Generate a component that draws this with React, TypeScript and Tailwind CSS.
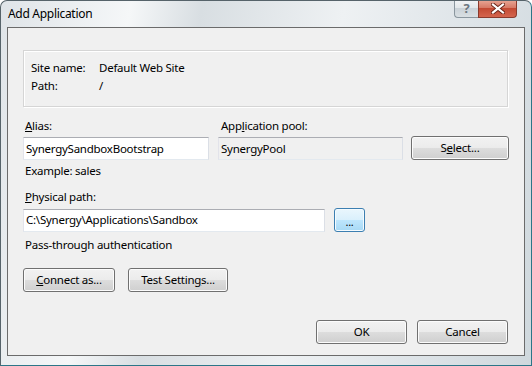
import React from "react";

const font = { fontFamily: '"Noto Sans", "Open Sans", sans-serif' };

function Btn({ children, className = "" }: { children: React.ReactNode; className?: string }) {
  return (
    <button
      className={`h-[24px] rounded-[3px] border border-[#707070] bg-[linear-gradient(#f2f2f2_0%,#ebebeb_50%,#dddddd_50%,#cfcfcf_100%)] shadow-[inset_0_0_0_1px_#fcfcfc] text-[11.5px] tracking-[-0.25px] text-black leading-none flex items-center justify-center ${className}`}
    >
      {children}
    </button>
  );
}

function Field({ value, readOnly = false, className = "" }: { value: string; readOnly?: boolean; className?: string }) {
  return (
    <div
      className={`h-[23px] border border-[#abadb3] border-l-[#e2e3ea] border-r-[#dbdfe6] border-b-[#e3e9ef] flex items-center pl-[2px] ${
        readOnly ? "bg-[#f0f0f0]" : "bg-white"
      } ${className}`}
    >
      {value}
    </div>
  );
}

export default function App() {
  return (
    <div
      style={font}
      className="w-[532px] h-[366px] flex flex-col rounded-t-[7px] border border-[#56636a] border-r-[#2c7688] border-b-[#2c7688] bg-[linear-gradient(100deg,#dfe4e8_0%,#f5f7f8_22%,#d8dee2_34%,#eef1f3_58%,#dee4e8_80%,#cfd8dd_100%)] text-black text-[11.5px] tracking-[-0.25px] overflow-hidden"
    >
      {/* title bar */}
      <div className="h-[26px] flex shrink-0">
        <span className="pl-[7px] pt-[5px] text-[12px] tracking-[-0.3px] leading-[16px]">Add Application</span>
        <div className="ml-auto mr-[14px] flex h-[18px] -mt-px">
          <div className="w-[24px] h-full rounded-bl-[4px] border border-[#8a969e] border-t-0 border-r-0 bg-[linear-gradient(#f2f4f6_0%,#e2e7ea_45%,#cad2d8_50%,#d9dfe3_100%)] flex items-center justify-center">
            <span className="text-[13px] leading-none text-[#6b7680] font-bold">?</span>
          </div>
          <div className="w-[39px] h-full rounded-br-[4px] border border-[#8a3a2c] border-t-0 bg-[linear-gradient(#e9a897_0%,#d77a66_45%,#c34a33_50%,#d4654e_100%)] flex items-center justify-center">
            <svg width="14" height="11" viewBox="0 0 14 11">
              <path d="M2 1.5L12 9.5M12 1.5L2 9.5" stroke="#6a2418" strokeWidth="4" strokeLinecap="square" />
              <path d="M2 1.5L12 9.5M12 1.5L2 9.5" stroke="#fff" strokeWidth="2.2" strokeLinecap="square" />
            </svg>
          </div>
        </div>
      </div>

      {/* client area */}
      <div className="mx-[6px] h-[329px] border border-[#6b6b6b] bg-[#f0f0f0] flex flex-col pl-[15px] pr-[15px] pt-[22px] pb-[11px]">
        <div className="mr-px h-[57px] border border-[#d5d5d5] shadow-[inset_1px_1px_0_#fff,1px_1px_0_#fff] pl-[7px] pt-[8px] grid grid-cols-[68px_1fr] auto-rows-[18px] items-center">
          <span>Site name:</span>
          <span>Default Web Site</span>
          <span>Path:</span>
          <span>/</span>
        </div>

        <div className="mt-[11px] flex">
          <div className="w-[186px] flex flex-col">
            <span className="leading-[16px] pl-[2px]">
              <u>A</u>lias:
            </span>
            <Field value="SynergySandboxBootstrap" className="mt-[3px]" />
          </div>
          <div className="ml-[9px] w-[185px] flex flex-col">
            <span className="leading-[16px] pl-[3px]">
              App<u>l</u>ication pool:
            </span>
            <Field value="SynergyPool" readOnly className="mt-[3px]" />
          </div>
          <Btn className="ml-[8px] self-end w-[98px] h-[23px]">
            S<u>e</u>lect...
          </Btn>
        </div>

        <span className="mt-[3px] leading-[16px] pl-[2px]">Example: sales</span>

        <span className="mt-[10px] leading-[16px] pl-[2px]">
          <u>P</u>hysical path:
        </span>
        <div className="mt-[3px] flex items-center h-[24px]">
          <Field value="C:\Synergy\Applications\Sandbox" className="w-[302px]" />
          <button className="ml-[9px] w-[31px] h-[24px] rounded-[3px] border border-[#3c7fb1] bg-[linear-gradient(#eaf6fd_0%,#d9f0fc_50%,#bee6fd_50%,#a7d9f5_100%)] shadow-[inset_0_0_0_1px_#f4fbff] text-[11px] leading-none flex items-center justify-center pt-[3px]">
            ...
          </button>
        </div>

        <span className="mt-[5px] leading-[16px] pl-[2px]">Pass-through authentication</span>

        <div className="mt-[15px] flex gap-[13px]">
          <Btn className="w-[92px]">
            <u>C</u>onnect as...
          </Btn>
          <Btn className="w-[100px]">
            Test Settin<u>g</u>s...
          </Btn>
        </div>

        <div className="mt-auto flex justify-end gap-[10px] mr-px">
          <Btn className="w-[91px]">OK</Btn>
          <Btn className="w-[91px]">Cancel</Btn>
        </div>
      </div>
    </div>
  );
}
